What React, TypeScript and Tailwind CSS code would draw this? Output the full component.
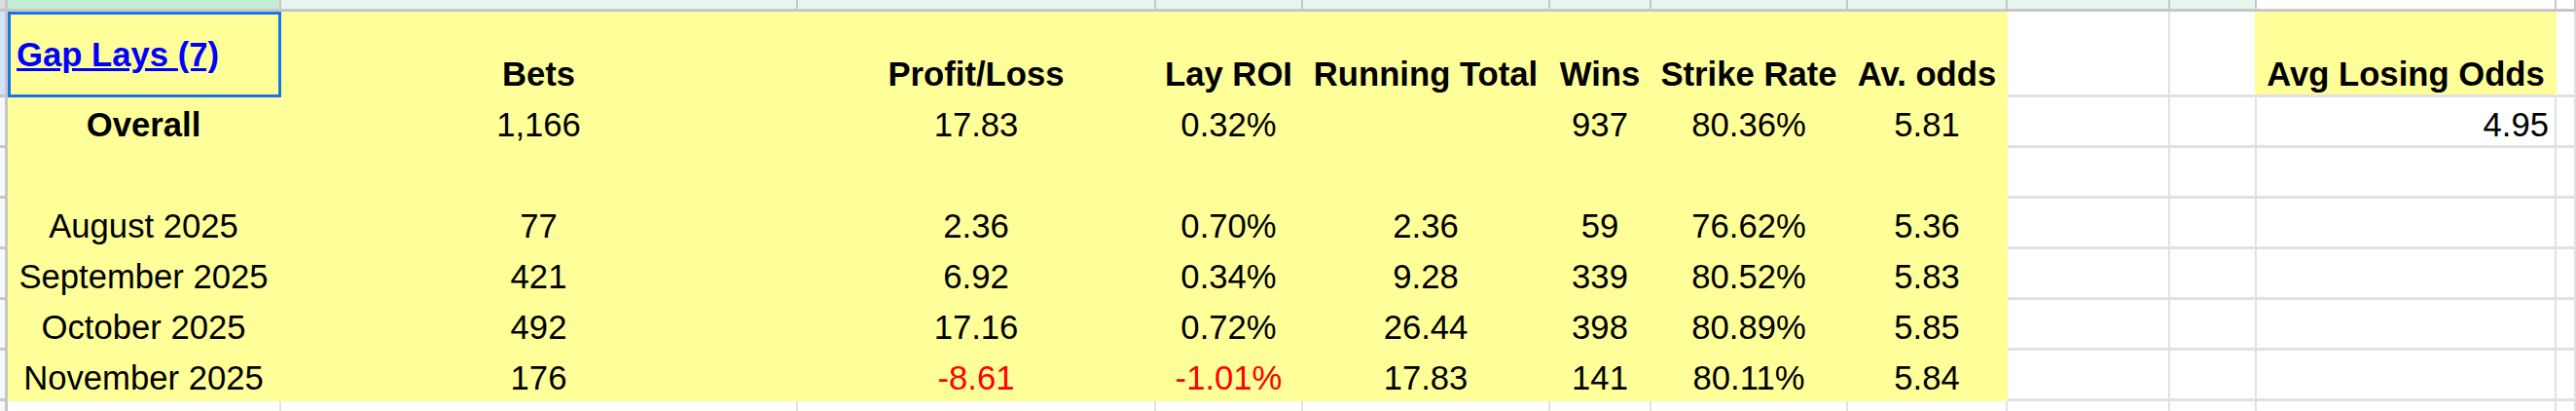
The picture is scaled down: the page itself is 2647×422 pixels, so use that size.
import React from "react";

const W = [
  "w-[281px]",
  "w-[531px]",
  "w-[368px]",
  "w-[151px]",
  "w-[254px]",
  "w-[104px]",
  "w-[202px]",
  "w-[164px]",
  "w-[167px]",
  "w-[89px]",
  "w-[308px]",
  "flex-1",
];

const HEAD_BG = [
  "bg-[#c4ecd2]",
  "bg-[#e6f5ed]",
  "bg-[#e6f5ed]",
  "bg-[#e6f5ed]",
  "bg-[#e6f5ed]",
  "bg-[#e6f5ed]",
  "bg-[#e6f5ed]",
  "bg-[#e6f5ed]",
  "bg-[#e6f5ed]",
  "bg-[#e6f5ed]",
  "bg-white",
  "bg-white",
];

type Cell = { t?: string; bold?: boolean; red?: boolean; align?: "c" | "r" | "l"; link?: boolean };

const e: Cell = {};
const n = (t: string, red = false): Cell => ({ t, red });
const h = (t: string): Cell => ({ t, bold: true });

const rows: { h: "h-[88px]" | "h-[52px]"; cells: Cell[] }[] = [
  {
    h: "h-[88px]",
    cells: [
      { t: "Gap Lays (7)", bold: true, link: true, align: "l" },
      h("Bets"),
      h("Profit/Loss"),
      h("Lay ROI"),
      h("Running Total"),
      h("Wins"),
      h("Strike Rate"),
      h("Av. odds"),
      e,
      e,
      h("Avg Losing Odds"),
      e,
    ],
  },
  {
    h: "h-[52px]",
    cells: [h("Overall"), n("1,166"), n("17.83"), n("0.32%"), e, n("937"), n("80.36%"), n("5.81"), e, e, { t: "4.95", align: "r" }, e],
  },
  { h: "h-[52px]", cells: [e, e, e, e, e, e, e, e, e, e, e, e] },
  {
    h: "h-[52px]",
    cells: [n("August 2025"), n("77"), n("2.36"), n("0.70%"), n("2.36"), n("59"), n("76.62%"), n("5.36"), e, e, e, e],
  },
  {
    h: "h-[52px]",
    cells: [n("September 2025"), n("421"), n("6.92"), n("0.34%"), n("9.28"), n("339"), n("80.52%"), n("5.83"), e, e, e, e],
  },
  {
    h: "h-[52px]",
    cells: [n("October 2025"), n("492"), n("17.16"), n("0.72%"), n("26.44"), n("398"), n("80.89%"), n("5.85"), e, e, e, e],
  },
  {
    h: "h-[52px]",
    cells: [
      n("November 2025"),
      n("176"),
      n("-8.61", true),
      n("-1.01%", true),
      n("17.83"),
      n("141"),
      n("80.11%"),
      n("5.84"),
      e,
      e,
      e,
      e,
    ],
  },
  { h: "h-[52px]", cells: [e, e, e, e, e, e, e, e, e, e, e, e] },
];

function isYellow(r: number, c: number) {
  return (r <= 6 && c <= 7) || (r === 0 && c === 10);
}

function BodyCell({ r, c, cell }: { r: number; c: number; cell: Cell }) {
  const yellow = isYellow(r, c);
  const selected = r === 0 && c === 0;

  let border: string;
  if (selected) {
    border = "border-[3px] border-[#1a73e8]";
  } else {
    const rightYellow = yellow || (r === 0 && c === 9);
    const bottomYellow = yellow && !(r === 0 && c === 10);
    border = [
      "border-r-2 border-b-[3px]",
      rightYellow ? "border-r-[#ffff99]" : "border-r-[#e1e1e1]",
      bottomYellow ? "border-b-[#ffff99]" : "border-b-[#e1e1e1]",
    ].join(" ");
  }

  const align =
    cell.align === "l"
      ? "justify-start items-center pl-[6px]"
      : cell.align === "r"
      ? "justify-end items-end pr-[6px] pb-[3px]"
      : "justify-center items-end pb-[3px]";

  const color = cell.link ? "text-[#0000ff] underline" : cell.red ? "text-[#ff0000]" : "text-black";

  return (
    <div className={`flex shrink-0 ${W[c]} h-full ${yellow ? "bg-[#ffff99]" : "bg-white"} ${border} ${align}`}>
      {cell.t ? (
        <span className={`leading-none whitespace-nowrap ${cell.bold ? "font-bold" : "font-normal"} ${color}`}>{cell.t}</span>
      ) : null}
    </div>
  );
}

export default function App() {
  return (
    <div className="w-[2647px] h-[422px] overflow-hidden bg-white font-['Liberation_Sans','Arial',sans-serif] text-[34.67px]">
      <div className="flex h-[12px]">
        <div className="w-[8px] shrink-0 h-full bg-[#dcdcdc] border-r-[3px] border-b-[3px] border-[#c7c7c7]" />
        {W.map((w, c) => (
          <div key={c} className={`shrink-0 h-full ${w} ${HEAD_BG[c]} border-r-2 border-b-[3px] border-[#c7c7c7]`} />
        ))}
      </div>
      {rows.map((row, r) => (
        <div key={r} className={`flex ${row.h}`}>
          <div
            className={`w-[8px] shrink-0 h-full border-r-[3px] border-b-[3px] border-[#c7c7c7] ${
              r === 0 ? "bg-[#d3e3fd]" : "bg-[#f8f9fa]"
            }`}
          />
          {row.cells.map((cell, c) => (
            <BodyCell key={c} r={r} c={c} cell={cell} />
          ))}
        </div>
      ))}
    </div>
  );
}
